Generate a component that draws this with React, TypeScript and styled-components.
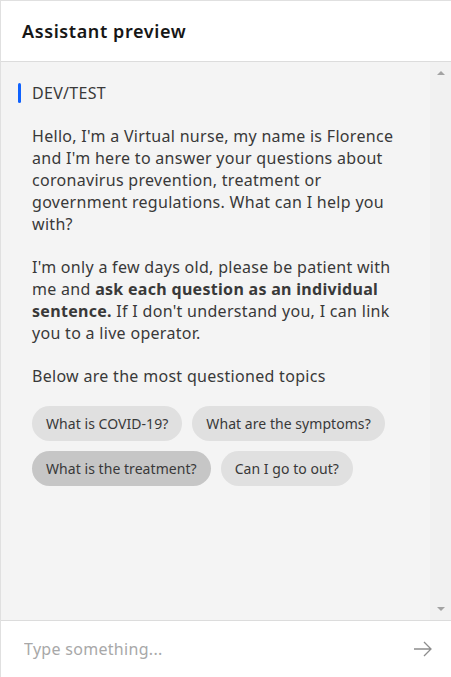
import React from "react";
import styled, { createGlobalStyle } from "styled-components";

const Global = createGlobalStyle`
  html, body { margin: 0; padding: 0; background: #ffffff; }
  body { font-family: "Noto Sans", "Open Sans", sans-serif; }
  * { box-sizing: border-box; }
`;

const Panel = styled.div`
  width: 451px;
  height: 677px;
  display: flex;
  flex-direction: column;
  border-top: 1px solid #e0e0e0;
  border-left: 1px solid #e0e0e0;
  background: #ffffff;
`;

const Header = styled.header`
  height: 61px;
  flex: none;
  display: flex;
  align-items: center;
  padding-left: 21px;
  border-bottom: 1px solid #dcdcdc;
  font-size: 18px;
  font-weight: 600;
  letter-spacing: 0.6px;
  color: #161616;
`;

const Body = styled.div`
  flex: 1;
  display: flex;
  background: #f4f4f4;
  min-height: 0;
`;

const Messages = styled.div`
  flex: 1;
  padding: 20px 0 0 17px;
  color: #393939;
  font-size: 16px;
  line-height: 22px;
  letter-spacing: 0.3px;
`;

const Env = styled.div`
  display: flex;
  align-items: center;
  gap: 11px;
  height: 22px;
  margin-bottom: 21px;
`;

const EnvBar = styled.span`
  width: 3px;
  height: 20px;
  border-radius: 2px;
  background: #0f62fe;
`;

const Bubble = styled.div`
  padding-left: 14px;
  width: 384px;
`;

const Para = styled.p<{ $last?: boolean }>`
  margin: 0 0 ${(p) => (p.$last ? 0 : 21)}px 0;
`;

const Chips = styled.div`
  display: flex;
  flex-wrap: wrap;
  gap: 10px 10px;
  margin-top: 19px;
`;

const Chip = styled.button<{ $active?: boolean }>`
  height: 35px;
  padding: 0 14px;
  border: none;
  border-radius: 18px;
  background: ${(p) => (p.$active ? "#c6c6c6" : "#e0e0e0")};
  color: #393939;
  font-family: inherit;
  font-size: 14px;
  letter-spacing: 0.05px;
  cursor: pointer;
`;

const Track = styled.div`
  width: 21px;
  flex: none;
  background: #f1f1f1;
  display: flex;
  flex-direction: column;
  justify-content: space-between;
  align-items: center;
  padding: 9px 0 9px;
`;

const Arrow = styled.span<{ $down?: boolean }>`
  width: 0;
  height: 0;
  border-left: 4px solid transparent;
  border-right: 4px solid transparent;
  ${(p) =>
    p.$down
      ? "border-top: 4px solid #a3a3a3;"
      : "border-bottom: 4px solid #a3a3a3;"}
`;

const InputBar = styled.div`
  height: 57px;
  flex: none;
  display: flex;
  align-items: center;
  border-top: 1px solid #dcdcdc;
  padding: 0 18px 0 23px;
`;

const Input = styled.input`
  flex: 1;
  border: none;
  outline: none;
  padding: 0;
  font-family: inherit;
  font-size: 16px;
  letter-spacing: 0.3px;
  color: #161616;
  background: transparent;
  &::placeholder { color: #a8a8a8; }
`;

const Send = styled.button`
  border: none;
  background: none;
  padding: 0;
  display: flex;
  color: #8d8d8d;
`;

export default function App() {
  return (
    <>
      <Global />
      <Panel>
        <Header>Assistant preview</Header>
        <Body>
          <Messages>
            <Env>
              <EnvBar />
              DEV/TEST
            </Env>
            <Bubble>
              <Para>
                Hello, I'm a Virtual nurse, my name is Florence and I'm here to
                answer your questions about coronavirus prevention, treatment
                or government regulations. What can I help you with?
              </Para>
              <Para>
                I'm only a few days old, please be patient with me and{" "}
                <b>ask each question as an individual sentence.</b> If I don't
                understand you, I can link you to a live operator.
              </Para>
              <Para $last>Below are the most questioned topics</Para>
              <Chips>
                <Chip>What is COVID-19?</Chip>
                <Chip>What are the symptoms?</Chip>
                <Chip $active>What is the treatment?</Chip>
                <Chip>Can I go to out?</Chip>
              </Chips>
            </Bubble>
          </Messages>
          <Track>
            <Arrow />
            <Arrow $down />
          </Track>
        </Body>
        <InputBar>
          <Input placeholder="Type something..." />
          <Send aria-label="Send">
            <svg width="20" height="20" viewBox="0 0 20 20" fill="none">
              <path
                d="M1 10h17M11 3l7 7-7 7"
                stroke="currentColor"
                strokeWidth="1.3"
              />
            </svg>
          </Send>
        </InputBar>
      </Panel>
    </>
  );
}
